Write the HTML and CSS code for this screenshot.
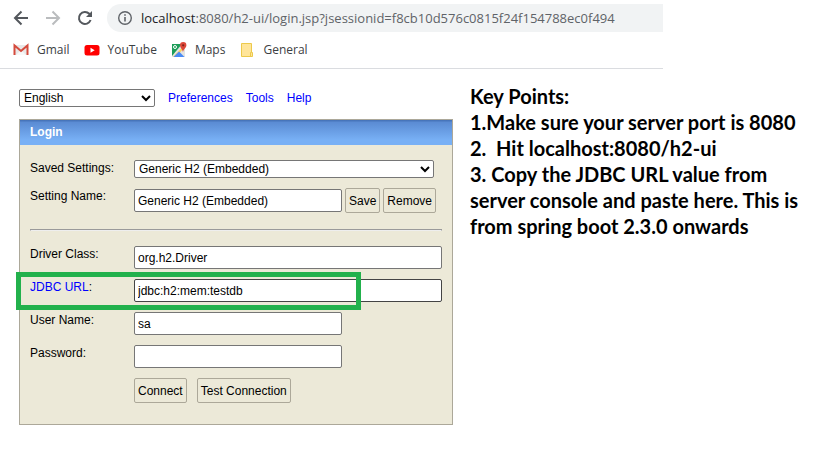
FILE: index.html
```html
<!DOCTYPE html>
<html lang="en">
<head>
<meta charset="utf-8">
<title>H2 Console</title>
<link rel="stylesheet" href="styles.css">
</head>
<body>
<header class="browser">
  <div class="toolbar">
    <button class="nav" type="button" aria-label="Back">
      <svg width="16" height="16" viewBox="0 0 16 16" fill="none" stroke="#54585d" stroke-width="2"><path d="M15 8H2.500M8.500 1.500L2 8l6.500 6.500"/></svg>
    </button>
    <button class="nav" type="button" aria-label="Forward" disabled>
      <svg width="16" height="16" viewBox="0 0 16 16" fill="none" stroke="#babcbe" stroke-width="2"><path d="M1 8h12.500M7.500 1.500L14 8l-6.500 6.500"/></svg>
    </button>
    <button class="nav" type="button" aria-label="Reload">
      <svg width="16" height="16" viewBox="0 0 16 16" fill="none" stroke="#54585d" stroke-width="2"><path d="M13.600 10A6 6 0 1 1 12.300 3.800L13.500 5"/><path d="M15 1v6H9z" fill="#54585d" stroke="none"/></svg>
    </button>
    <div class="address">
      <svg width="16" height="16" viewBox="0 0 16 16" fill="none" stroke="#5f6368"><circle cx="8" cy="8" r="6.300" stroke-width="1.400"/><path d="M8 7v4.500M8 4.200v1.600" stroke-width="1.600"/></svg>
      <span class="url"><span class="host">localhost</span>:8080/h2-ui/login.jsp?jsessionid=f8cb10d576c0815f24f154788ec0f494</span>
    </div>
  </div>
  <nav class="bookmarks">
    <a href="#gmail">
      <svg width="16" height="16" viewBox="0 0 16 16"><path d="M1 3h14v10H1z" fill="#e8e8e8"/><path d="M3 13l5-5 5 5z" fill="#f8f8f8"/><path d="M1.500 13V3.500L8 9l6.500-5.500V13" fill="none" stroke="#d54b3d" stroke-width="2"/></svg>
      Gmail</a>
    <a href="#youtube">
      <svg width="16" height="16" viewBox="0 0 16 16"><rect x="0.500" y="3" width="15" height="10.500" rx="2.500" fill="#f00"/><path d="M6.500 5.800v5L10.700 8.300z" fill="#fff"/></svg>
      YouTube</a>
    <a href="#maps">
      <svg width="16" height="16" viewBox="0 0 16 16"><path d="M1 2h13v13H1z" fill="#e4e4e2"/><path d="M1 2h10L1 14z" fill="#1c9d58"/><path d="M2 15L13 3.500l1 1.500L5 15z" fill="#fbd25a"/><path d="M2.500 15L8 9.500l5.500 5.500z" fill="#4a8af4"/><circle cx="4" cy="5" r="1.500" fill="none" stroke="#fff"/><path d="M12 10C11.500 7 9 6 9 3.300a3.200 3.200 0 0 1 6.400 0C15.400 6 12.500 7 12 10z" fill="#dc4738"/><circle cx="12.200" cy="3.300" r="1.100" fill="#7a221b"/></svg>
      Maps</a>
    <a href="#general">
      <svg width="16" height="16" viewBox="0 0 16 16"><path d="M2.500 1.500h10v9h1v4h-11z" fill="#ffe59a" stroke="#ecc94b"/><path d="M11.500 14v-3.500h1" fill="none" stroke="#ecc94b"/></svg>
      General</a>
  </nav>
</header>
<main class="page">
  <section class="console">
    <div class="menu">
      <select class="language" aria-label="Language"><option>English</option></select>
      <a href="#preferences">Preferences</a>
      <a href="#tools">Tools</a>
      <a href="#help">Help</a>
    </div>
    <form class="login">
      <h1>Login</h1>
      <div class="fields">
        <div class="row">
          <label for="saved">Saved Settings:</label>
          <select id="saved" class="saved"><option>Generic H2 (Embedded)</option></select>
        </div>
        <div class="row">
          <label for="name">Setting Name:</label>
          <div class="group">
            <input id="name" class="short" type="text" value="Generic H2 (Embedded)">
            <button type="button">Save</button>
            <button type="button">Remove</button>
          </div>
        </div>
        <hr>
        <div class="row">
          <label for="driver">Driver Class:</label>
          <input id="driver" type="text" value="org.h2.Driver">
        </div>
        <div class="row marked">
          <label for="url"><a href="#url-help">JDBC URL</a>:</label>
          <input id="url" class="focused" type="text" value="jdbc:h2:mem:testdb">
        </div>
        <div class="row">
          <label for="user">User Name:</label>
          <input id="user" class="short" type="text" value="sa">
        </div>
        <div class="row">
          <label for="password">Password:</label>
          <input id="password" class="short" type="password">
        </div>
        <div class="row">
          <span></span>
          <div class="group actions">
            <button type="submit">Connect</button>
            <button type="button">Test Connection</button>
          </div>
        </div>
      </div>
    </form>
  </section>
  <aside class="notes">
    <h2>Key Points:</h2>
    <p>1.Make sure your server port is 8080</p>
    <p>2.&nbsp; Hit localhost:8080/h2-ui</p>
    <p>3. Copy the JDBC URL value from server console and paste here. This is from spring boot 2.3.0 onwards</p>
  </aside>
</main>
</body>
</html>
```
FILE: styles.css
```css
*, ::after { box-sizing: border-box; }
body {
  margin: 0;
  background: #fff;
  color: #000;
  font: 12px/16px "Liberation Sans", Arial, sans-serif;
}
a { color: #00f; text-decoration: none; }

.browser {
  width: 81%;
  padding-top: 4px;
  border-bottom: 1px solid #dadce0;
  font-family: "Open Sans", "Noto Sans", sans-serif;
}
.toolbar { display: flex; align-items: center; gap: 16px; padding-left: 13px; }
.nav { display: flex; padding: 0; border: 0; background: none; }
.address {
  display: flex;
  flex: 1;
  align-items: center;
  gap: 8px;
  height: 28px;
  margin-left: -2px;
  padding-left: 10px;
  border-radius: 14px 0 0 14px;
  background: #f1f3f4;
  color: #5f6368;
  font-size: 13px;
  white-space: nowrap;
}
.host { color: #202124; }
.bookmarks { display: flex; gap: 14px; padding: 10px 13px; }
.bookmarks a { display: flex; align-items: center; gap: 8px; color: #3c4043; }

.page {
  display: grid;
  grid-template-columns: 434fr 340fr;
  gap: 17px;
  padding: 14px 9px 14px 19px;
}
.menu { display: flex; align-items: center; gap: 13px; padding-top: 6px; margin-bottom: 12px; }
select, input {
  height: 23px;
  min-width: 0;
  border: 1px solid #767676;
  border-radius: 2px;
  background: #fff;
  color: #000;
  font: inherit;
}
select { height: 18px; padding: 0; }
input { width: 100%; padding: 1px 3px; }
.language { width: 136px; }
.login { border: 1px solid #aca899; background: #ece9d8; }
h1 {
  margin: 0;
  padding: 4px 10px 5px;
  background: linear-gradient(#426fb4, #5b8cd4 10%, #78b0f5 80%);
  color: #fff;
  font-size: 12px;
  line-height: 16px;
}
.fields { display: flex; flex-direction: column; gap: 10px; padding: 15px 10px 21px; }
.row { display: grid; grid-template-columns: 104px 1fr; align-items: start; }
.saved { width: 300px; max-width: 100%; }
.short { width: 208px; }
.focused { border-color: #444; }
.group { display: flex; align-items: center; gap: 3px; }
.actions { gap: 10px; }
.group button {
  height: 25px;
  padding: 0 3px;
  border: 1px solid #aca899;
  border-radius: 2px;
  background: #ece9d8;
  color: #000;
  font: inherit;
}
hr {
  width: 100%;
  height: 2px;
  margin: 6px 0 5px;
  border: 1px solid #9a9a9a;
  border-bottom-color: #eee;
}
.marked { position: relative; }
.marked::after {
  content: "";
  position: absolute;
  top: -7px;
  left: -14px;
  width: 345px;
  height: 38px;
  border: 5px solid #22b14c;
  pointer-events: none;
}

.notes { font: bold 20px/26px Lato, sans-serif; }
.notes h2, .notes p { margin: 0; font: inherit; }
```
